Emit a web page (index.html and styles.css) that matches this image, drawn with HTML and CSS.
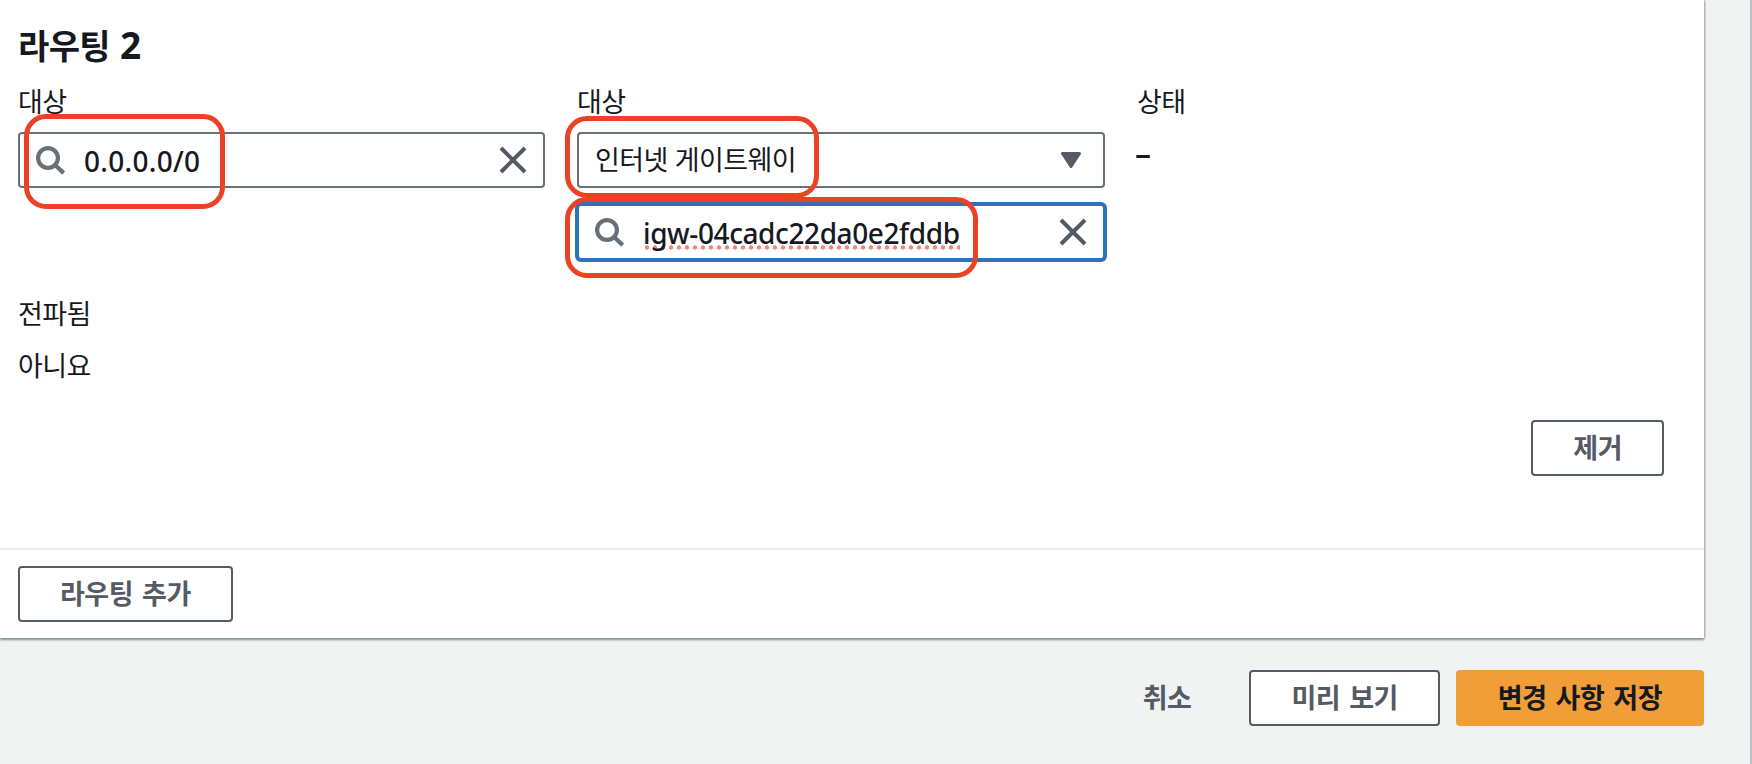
FILE: index.html
```html
<!DOCTYPE html>
<html lang="ko">
<head>
    <meta charset="UTF-8">
    <meta name="viewport" content="width=device-width, initial-scale=1.0">
    <title>라우팅 편집</title>
    <link rel="stylesheet" href="styles.css">
</head>
<body>
    <main class="page">
        <section class="card">
            <div class="route">
                <h3>라우팅 <span class="number">2</span></h3>
                <div class="route-grid">
                    <div class="field">
                        <span class="label">대상</span>
                        <div class="input">
                            <svg class="search-icon" width="30" height="30" viewBox="0 0 30 30"><circle cx="12" cy="12" r="9.9"/><path d="M18.5 18.5l9.2 8.6"/></svg>
                            <span class="value">0.0.0.0/0</span>
                            <svg class="close-icon" width="28" height="28" viewBox="0 0 28 28"><path d="M2 2l24 24M26 2L2 26"/></svg>
                            <div class="mark mark-cidr"></div>
                        </div>
                    </div>
                    <div class="field">
                        <span class="label">대상</span>
                        <div class="input select">
                            <span class="option">인터넷 게이트웨이</span>
                            <svg class="caret" width="20" height="16" viewBox="0 0 20 16"><path d="M1.5 1.5h17L10 14.5z"/></svg>
                            <div class="mark mark-target"></div>
                        </div>
                        <div class="input focused">
                            <svg class="search-icon" width="30" height="30" viewBox="0 0 30 30"><circle cx="12" cy="12" r="9.9"/><path d="M18.5 18.5l9.2 8.6"/></svg>
                            <span class="value misspelled">igw-04cadc22da0e2fddb</span>
                            <svg class="close-icon" width="28" height="28" viewBox="0 0 28 28"><path d="M2 2l24 24M26 2L2 26"/></svg>
                            <div class="mark mark-igw"></div>
                        </div>
                    </div>
                    <div class="field">
                        <span class="label">상태</span>
                        <span class="status">–</span>
                    </div>
                    <div class="field">
                        <span class="label">전파됨</span>
                        <span class="text">아니요</span>
                    </div>
                </div>
                <div class="route-actions">
                    <button class="btn">제거</button>
                </div>
            </div>
            <div class="card-footer">
                <button class="btn">라우팅 추가</button>
            </div>
        </section>
        <div class="form-actions">
            <button class="btn link">취소</button>
            <button class="btn">미리 보기</button>
            <button class="btn primary">변경 사항 저장</button>
        </div>
    </main>
</body>
</html>
```
FILE: styles.css
```css
* {
    box-sizing: border-box;
}

body {
    margin: 0;
    height: 764px;
    overflow: hidden;
    background-color: #f1f3f3;
    color: #16191f;
    font-family: "Noto Sans CJK KR", sans-serif;
    font-size: 27px;
    letter-spacing: -0.6px;
    line-height: 40px;
}

.page {
    height: 764px;
    padding-right: 46px;
    border-right: 2px solid #bcc2c4;
}

.card {
    height: 638px;
    display: flex;
    flex-direction: column;
    background-color: white;
    box-shadow: 0 2px 2px #879196, 1px 0 2px #a9b0b4;
}

.route {
    flex: 1;
    padding: 23px 40px 0 18px;
}

h3 {
    height: 44px;
    margin: 0 0 9px;
    font-size: 34px;
    font-weight: 700;
    line-height: 44px;
}

.number {
    margin-left: 1px;
    font-family: "Noto Sans", sans-serif;
    font-size: 37px;
}

.route-grid {
    display: grid;
    grid-template-columns: 527px 528px 510px;
    column-gap: 32px;
    row-gap: 28px;
}

.field {
    display: flex;
    flex-direction: column;
}

.label {
    height: 40px;
    margin: 5px 0 11px;
}

.text {
    margin-top: 1px;
}

.input {
    position: relative;
    display: flex;
    align-items: center;
    height: 56px;
    padding: 0 16px;
    border: 2px solid #687078;
    border-radius: 4px;
    background-color: white;
}

.input.focused {
    margin-top: 16px;
    border-color: #3072b8;
    box-shadow: 0 0 0 2px #3072b8;
}

.search-icon {
    margin-top: 2px;
    fill: none;
    stroke: #687078;
    stroke-width: 4.2;
}

.value {
    margin-top: 2px;
    margin-left: 18px;
    font-family: "Noto Sans", sans-serif;
    font-size: 28px;
    font-weight: 500;
    letter-spacing: 0.3px;
    line-height: 38px;
}

.option {
    margin-top: -2px;
}

.misspelled {
    letter-spacing: -0.4px;
    background: radial-gradient(circle, #f28578 1.9px, transparent 2.4px) 0 calc(100% - 2px) / 8px 5px repeat-x;
}

.close-icon {
    margin-left: auto;
    fill: none;
    stroke: #545b64;
    stroke-width: 4;
}

.caret {
    margin-left: auto;
    margin-right: 6px;
    fill: #545b64;
    stroke: #545b64;
    stroke-width: 3;
    stroke-linejoin: round;
}

.status {
    margin-top: 1px;
    margin-left: -2px;
    font-family: "Noto Sans", sans-serif;
    font-size: 32px;
    font-weight: 500;
}

.btn {
    height: 56px;
    padding: 0 40px 2px;
    border: 2px solid #545b64;
    border-radius: 4px;
    background-color: white;
    color: #545b64;
    font-family: inherit;
    font-size: 27px;
    font-weight: 700;
    letter-spacing: -0.5px;
    word-spacing: 2px;
    line-height: 40px;
    cursor: pointer;
}

.route-actions {
    display: flex;
    justify-content: flex-end;
    margin-top: 35px;
}

.card-footer {
    height: 90px;
    padding: 16px 18px;
    border-top: 2px solid #eaeded;
}

.form-actions {
    display: flex;
    justify-content: flex-end;
    gap: 16px;
    padding-top: 32px;
}

.btn.link {
    border-color: transparent;
    background-color: transparent;
}

.btn.primary {
    border-color: #f19e38;
    background-color: #f19e38;
    color: #16191f;
}

/* red callouts over the fields */
.mark {
    position: absolute;
    z-index: 1;
    border: 5px solid #eb4125;
    border-radius: 22px;
    pointer-events: none;
}

.mark-cidr {
    left: 4px;
    top: -20px;
    width: 201px;
    height: 95px;
}

.mark-target {
    left: -14px;
    top: -18px;
    width: 254px;
    height: 82px;
}

.mark-igw {
    left: -14px;
    top: -9px;
    width: 413px;
    height: 81px;
}
```
